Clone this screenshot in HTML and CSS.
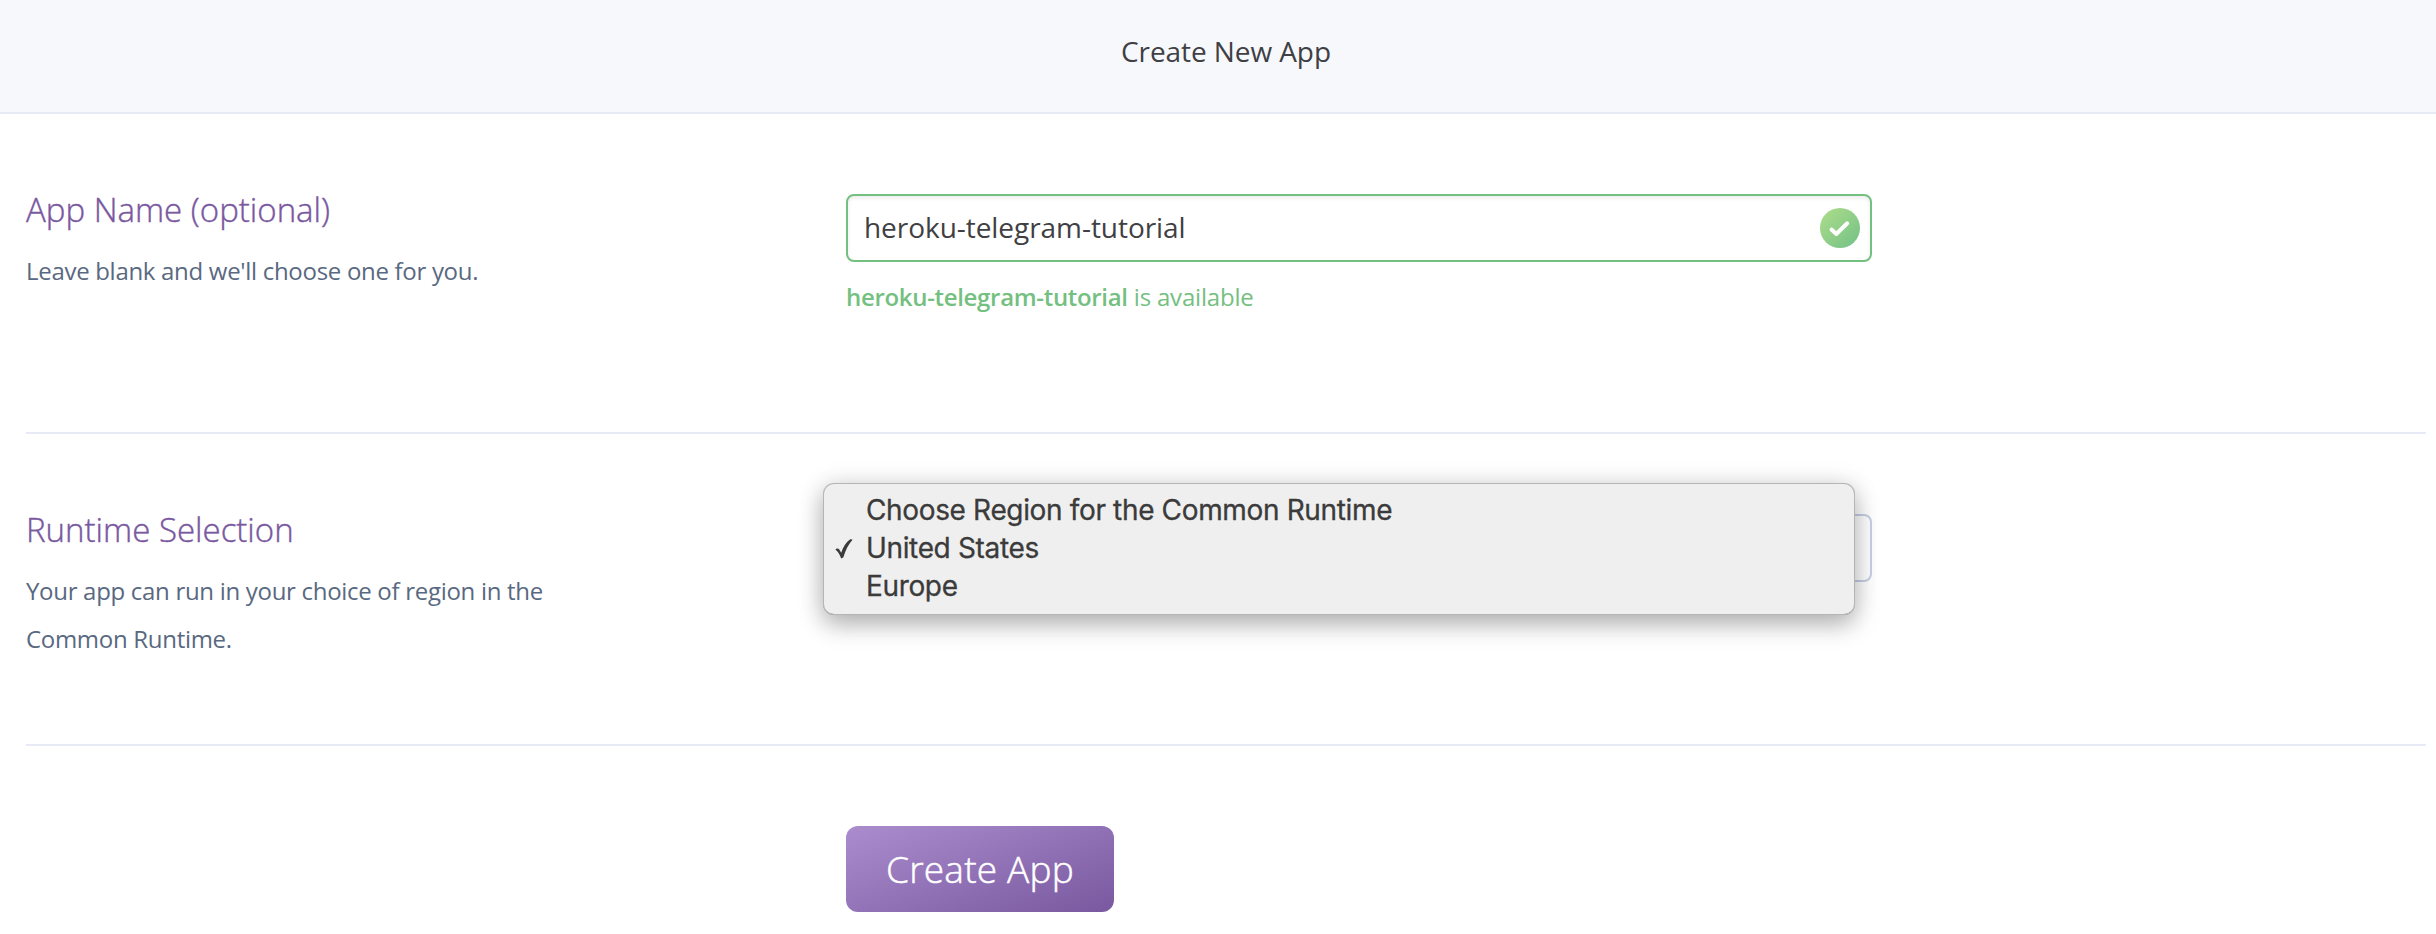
FILE: index.html
```html
<!DOCTYPE html>
<html lang="en">
<head>
<meta charset="utf-8">
<title>Create New App</title>
<link rel="stylesheet" href="styles.css">
</head>
<body>
<header class="topbar"><h1 class="topbar-title">Create New App</h1></header>
<main class="form">
  <section class="row row-name">
    <div class="info">
      <h2 class="info-title">App Name (optional)</h2>
      <p class="info-text">Leave blank and we'll choose one for you.</p>
    </div>
    <div class="control">
      <div class="field field-valid">
        <span class="field-value">heroku-telegram-tutorial</span>
        <svg class="field-check" width="40" height="40" viewBox="0 0 40 40">
          <defs><linearGradient id="ok" x1="0.1" y1="0.1" x2="0.9" y2="0.9"><stop offset="0" stop-color="#a8db8a"/><stop offset="1" stop-color="#79c387"/></linearGradient></defs>
          <circle cx="20" cy="20" r="20" fill="url(#ok)"/>
          <path d="M11.5 21.5 L16.3 26 L27.2 15.3" fill="none" stroke="#fff" stroke-width="4" stroke-linecap="round" stroke-linejoin="round"/>
        </svg>
      </div>
      <p class="status"><strong class="status-name">heroku-telegram-tutorial</strong> is available</p>
    </div>
  </section>
  <section class="row row-region">
    <div class="info">
      <h2 class="info-title">Runtime Selection</h2>
      <p class="info-text">Your app can run in your choice of region in the<br>Common Runtime.</p>
    </div>
    <div class="control">
      <div class="field field-select">
        <ul class="menu">
          <li class="option">Choose Region for the Common Runtime</li>
          <li class="option">
            <svg class="option-check" width="18" height="20" viewBox="0 0 18 20"><path d="M0.4 10.600 C1.200 9.200 3.400 9 4.300 10.400 L6.200 13.800 C8.200 8 11 3.200 14.600 0.800 C15.800 0.100 17.400 0.200 17.500 0.800 C13.400 5.200 10.600 11.400 8.300 18.600 L6.200 19.400 C4.800 15.800 3 12.600 0.400 10.600 Z" fill="#3b3b3b"/></svg>
            United States
          </li>
          <li class="option">Europe</li>
        </ul>
      </div>
    </div>
  </section>
  <div class="actions"><button class="submit" type="button">Create App</button></div>
</main>
</body>
</html>
```
FILE: styles.css
```css
* { box-sizing: border-box; }

body {
  margin: 0;
  background: #fff;
  font-family: "Open Sans", "Noto Sans", sans-serif;
  color: #3f3f44;
}

h1, h2, p, ul { margin: 0; padding: 0; }

.topbar {
  height: 114px;
  padding: 31px 0 0 16px;
  background: #f7f8fc;
  border-bottom: 2px solid #e6eaf4;
  text-align: center;
}

.topbar-title {
  font-size: 28px;
  font-weight: 400;
  line-height: 40px;
  letter-spacing: -0.08px;
}

.form { padding: 0 10px 0 26px; }

.row {
  display: flex;
  padding-top: 75px;
  border-bottom: 2px solid #e6eaf4;
}

.row-name { height: 320px; }
.row-region { height: 312px; }

.info { flex: 0 0 820px; }

.info-title {
  padding-top: 1px;
  font-size: 33px;
  font-weight: 300;
  line-height: 40px;
  color: #79589f;
  -webkit-text-stroke: 0.4px #79589f;
}

.info-text {
  margin-top: 17px;
  font-size: 24px;
  line-height: 48px;
  letter-spacing: -0.3px;
  color: #596981;
}

.control {
  width: 1026px;
  padding-top: 5px;
}

.field {
  display: flex;
  align-items: center;
  justify-content: space-between;
  height: 68px;
  border: 2px solid #c6d0e6;
  border-radius: 8px;
  background: #fff;
}

.field-valid {
  padding: 0 10px 0 16px;
  border-color: #74c080;
  box-shadow: inset 0 2px 4px rgba(0, 0, 0, 0.08);
}

.field-value {
  padding-bottom: 2px;
  font-size: 28px;
  line-height: 62px;
  letter-spacing: -0.05px;
}

.status {
  margin-top: 19px;
  font-size: 24px;
  line-height: 32px;
  letter-spacing: -0.18px;
  color: #74c080;
}

.status-name {
  font-weight: 600;
  letter-spacing: -0.32px;
}

.field-select { position: relative; }

/* Native-style popup laid over the select */
.menu {
  position: absolute;
  top: -33px;
  left: -25px;
  width: 1032px;
  height: 132px;
  padding: 8px 0 0 43px;
  list-style: none;
  border-radius: 11px;
  background: #efefef;
  box-shadow: inset 0 0 0 1px #b5b5b5, inset 0 -1px 0 #929292, 0 10px 24px rgba(0, 0, 0, 0.27), 0 0 26px rgba(0, 0, 0, 0.1);
  font-family: Inter, Roboto, sans-serif;
  color: #3b3b3b;
}

.option {
  position: relative;
  font-size: 28px;
  line-height: 38px;
  letter-spacing: -0.35px;
  -webkit-text-stroke: 0.3px #3b3b3b;
}

.option-check {
  position: absolute;
  left: -31px;
  top: 10px;
}

.actions { padding: 80px 0 0 820px; }

.submit {
  display: block;
  width: 268px;
  height: 86px;
  padding: 0 0 2px;
  border: 0;
  border-radius: 12px;
  background: linear-gradient(160deg, #ab8dce 0%, #79589f 100%);
  color: #fff;
  font: 300 37px "Open Sans", sans-serif;
  letter-spacing: 0.2px;
  -webkit-text-stroke: 0.5px #fff;
}
```
